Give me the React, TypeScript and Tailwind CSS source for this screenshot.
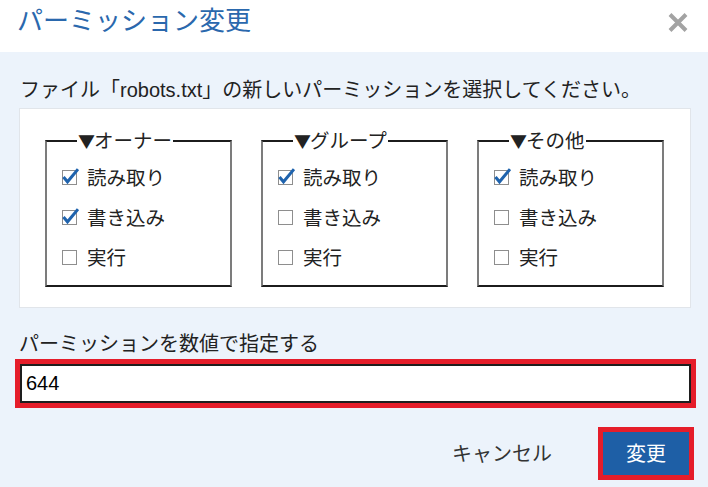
import { useState } from "react";

type Perm = { read: boolean; write: boolean; exec: boolean };

const groups: { key: "owner" | "group" | "other"; label: string }[] = [
  { key: "owner", label: "オーナー" },
  { key: "group", label: "グループ" },
  { key: "other", label: "その他" },
];

const rows: { key: keyof Perm; label: string }[] = [
  { key: "read", label: "読み取り" },
  { key: "write", label: "書き込み" },
  { key: "exec", label: "実行" },
];

function CheckBox({ checked }: { checked: boolean }) {
  return (
    <svg width="17" height="17" viewBox="0 0 17 17" className="shrink-0">
      <rect x="0.5" y="2.5" width="14" height="14" fill="#fff" stroke="#8e8e8e" />
      {checked && (
        <path d="M1.5 9 L5.5 13.8 L16 1.2" fill="none" stroke="#1f63ad" strokeWidth="3" />
      )}
    </svg>
  );
}

function toOctal(p: Perm) {
  return (p.read ? 4 : 0) + (p.write ? 2 : 0) + (p.exec ? 1 : 0);
}

export default function App() {
  const [perms, setPerms] = useState<Record<string, Perm>>({
    owner: { read: true, write: true, exec: false },
    group: { read: true, write: false, exec: false },
    other: { read: true, write: false, exec: false },
  });

  const value = `${toOctal(perms.owner)}${toOctal(perms.group)}${toOctal(perms.other)}`;

  const toggle = (g: string, k: keyof Perm) =>
    setPerms((prev) => ({ ...prev, [g]: { ...prev[g], [k]: !prev[g][k] } }));

  return (
    <div className="min-h-screen bg-[#ecf3fb] font-['Liberation_Sans','Noto_Sans_CJK_JP',sans-serif] text-[#222]">
      <header className="flex h-[52px] items-start justify-between bg-white">
        <h1 className="pl-[17px] pt-[4px] text-[26px] leading-[34px] font-normal text-[#2a68ad]">
          パーミッション変更
        </h1>
        <button aria-label="閉じる" className="mr-[20px] mt-[12px]">
          <svg width="20" height="21" viewBox="0 0 20 21">
            <path d="M2 2.5 L18 18.5 M18 2.5 L2 18.5" stroke="#a3a3a3" strokeWidth="4" />
          </svg>
        </button>
      </header>

      <main className="pl-[19px] pr-[17px]">
        <p className="pl-[1px] pt-[26px] text-[20px] leading-[24px]">
          ファイル「robots.txt」の新しいパーミッションを選択してください。
        </p>

        <div className="mt-[6px] border border-[#e1e5ea] bg-white pb-[20px] pl-[25px] pr-[26px] pt-[21px]">
          <div className="grid grid-cols-3 gap-[29px]">
            {groups.map((g) => (
              <fieldset
                key={g.key}
                className="border-x-2 border-y-2 border-x-[#7c7c7c] border-y-[#1c1c1c] pb-[7px] pl-[15px] pt-[6px]"
              >
                <legend className="ml-[15px] px-[1px] text-[19.5px] leading-[22px]">
                  <span className="inline-block w-[16px] font-['Noto_Sans_CJK_JP',sans-serif] text-[17px]">
                    ▼
                  </span>
                  {g.label}
                </legend>
                {rows.map((r) => (
                  <label
                    key={r.key}
                    className="flex h-[40px] cursor-pointer items-center"
                    onClick={() => toggle(g.key, r.key)}
                  >
                    <span className="-mt-[3px]">
                      <CheckBox checked={perms[g.key][r.key]} />
                    </span>
                    <span className="ml-[8px] text-[19.5px] leading-[24px]">{r.label}</span>
                  </label>
                ))}
              </fieldset>
            ))}
          </div>
        </div>

        <p className="mt-[24px] text-[20px] leading-[24px]">パーミッションを数値で指定する</p>
        <div className="mt-[8px] pl-[1px]">
          <input
            readOnly
            value={value}
            className="h-[39px] w-full border-2 border-[#1e1e1e] bg-white pl-[4px] text-[20px] text-black outline-[5px] outline-solid outline-[#e51d2a]"
          />
        </div>

        <div className="mt-[29px] flex items-center justify-end gap-[26px] pr-[2px]">
          <button className="pl-[21px] pr-[25px] text-[20px] leading-[24px] text-[#333]">キャンセル</button>
          <button className="h-[43px] w-[86px] bg-[#1e5fa6] text-[20px] text-white outline-[5px] outline-solid outline-[#e51d2a]">
            変更
          </button>
        </div>
      </main>
    </div>
  );
}
